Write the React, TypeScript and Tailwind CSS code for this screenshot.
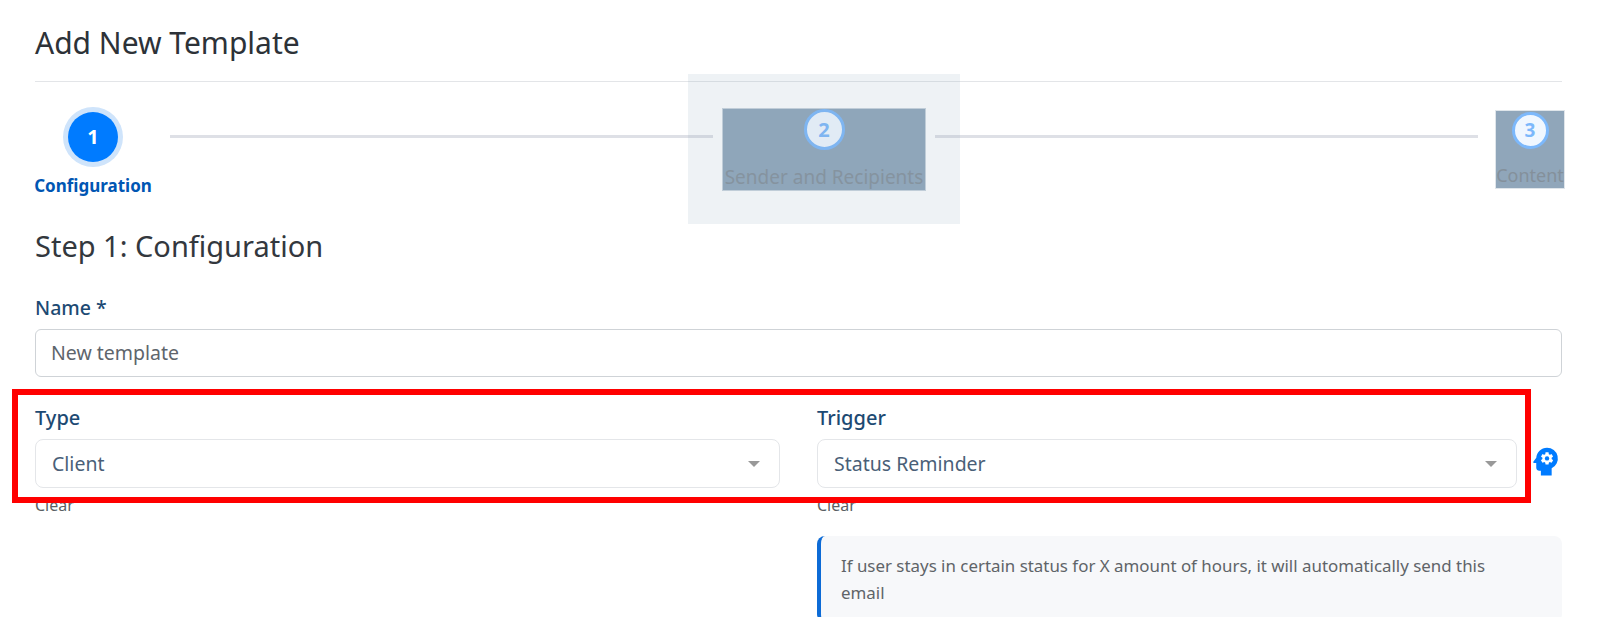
import { MdPsychology } from 'react-icons/md';

const Caret = () => <span className="h-0 w-0 border-x-[6px] border-t-[6px] border-x-transparent border-t-[#999]" />;

const Select = ({ value }: { value: string }) => (
  <div className="flex h-[49px] items-center justify-between rounded-lg border border-[#e4e6e9] bg-white pl-[16px] pr-[19px] text-[19.5px] text-[#4a5f78]">
    <span>{value}</span>
    <Caret />
  </div>
);

export default function App() {
  return (
    <div className="relative h-[617px] w-full overflow-hidden bg-white pl-[35px] pr-[42px] font-['Noto_Sans',sans-serif] text-[#2d3238]">
      <h1 className="flex h-[82px] items-center border-b border-[#e3e5e8] pt-[4px] text-[30px] leading-none">Add New Template</h1>

      <div className="flex h-[136px] items-start">
        <div className="flex w-[116px] shrink-0 flex-col items-center pt-[30px]">
          <div className="flex h-[50px] w-[50px] items-center justify-center rounded-full bg-[#007bff] text-[20px] font-bold text-white shadow-[0_0_0_5px_#cfe4fb]">
            1
          </div>
          <div className="mt-[14px] whitespace-nowrap text-[17px] font-bold leading-5 text-[#0056b3]">Configuration</div>
        </div>
        <div className="ml-[19px] mt-[53px] h-[3px] flex-1 bg-[#dee0e6]" />
        <div className="relative mx-[10px] mt-[27px] flex h-[81px] w-[202px] shrink-0 flex-col items-center bg-[#90a6ba] shadow-[0_0_0_1px_#c9d4dd]">
          <div className="flex h-[41px] w-[41px] items-center justify-center rounded-full border-[3px] border-[#7cb8fb] bg-[#f0f7ff] text-[20px] font-bold text-[#7cb8fb]">
            2
          </div>
          <div className="absolute bottom-[1px] whitespace-nowrap text-[19px] leading-6 text-[#84909b]">Sender and Recipients</div>
        </div>
        <div className="mr-[18px] mt-[53px] h-[3px] flex-1 bg-[#dee0e6]" />
        <div className="relative -mr-[2px] mt-[29px] flex h-[77px] w-[68px] shrink-0 flex-col items-center bg-[#90a6ba] shadow-[0_0_0_1px_#dfe5ea]">
          <div className="mt-[1px] flex h-[37px] w-[37px] items-center justify-center rounded-full border-[3px] border-[#7cb8fb] bg-[#f0f7ff] text-[19px] font-bold text-[#7cb8fb]">
            3
          </div>
          <div className="absolute bottom-[1px] whitespace-nowrap text-[18px] leading-6 text-[#84909b]">Content</div>
        </div>
      </div>

      <h2 className="mt-[8px] text-[29px] leading-[40px] text-[#33383e]">Step 1: Configuration</h2>

      <label className="mt-[30px] block text-[19.5px] font-medium leading-6 text-[#1d4a73]">Name *</label>
      <div className="mt-[9px] flex h-[48px] items-center rounded-md border border-[#cfd3d7] px-[15px] text-[19.5px] text-[#5e656c]">New template</div>

      <div className="mt-[29px] grid grid-cols-[745px_1fr] gap-x-[37px]">
        <div>
          <label className="block text-[20px] font-medium leading-6 text-[#1d4a73]">Type</label>
          <div className="mt-[9px]">
            <Select value="Client" />
          </div>
          <div className="mt-[9px] text-[16px] leading-4 text-[#5a5f65]">Clear</div>
        </div>
        <div>
          <label className="block text-[20px] font-medium leading-6 text-[#1d4a73]">Trigger</label>
          <div className="relative mr-[45px] mt-[9px]">
            <Select value="Status Reminder" />
            <MdPsychology className="absolute left-[calc(100%+10px)] top-[4px] text-[37px] text-[#007bff]" />
          </div>
          <div className="mt-[9px] text-[16px] leading-4 text-[#5a5f65]">Clear</div>
          <div className="mt-[23px] rounded-lg border-l-4 border-[#0d6bd6] bg-[#f7f8fa] pb-[16px] pl-[20px] pr-[50px] pt-[16px] text-[16.9px] leading-[27px] text-[#5f6468]">
            If user stays in certain status for X amount of hours, it will automatically send this email
          </div>
        </div>
      </div>

      <div className="pointer-events-none absolute left-[688px] top-[74px] h-[150px] w-[272px] bg-[#90a6ba]/15" />
      <div className="pointer-events-none absolute left-[12px] top-[389px] h-[114px] w-[1519px] border-[6px] border-[#ff0000]" />
    </div>
  );
}
